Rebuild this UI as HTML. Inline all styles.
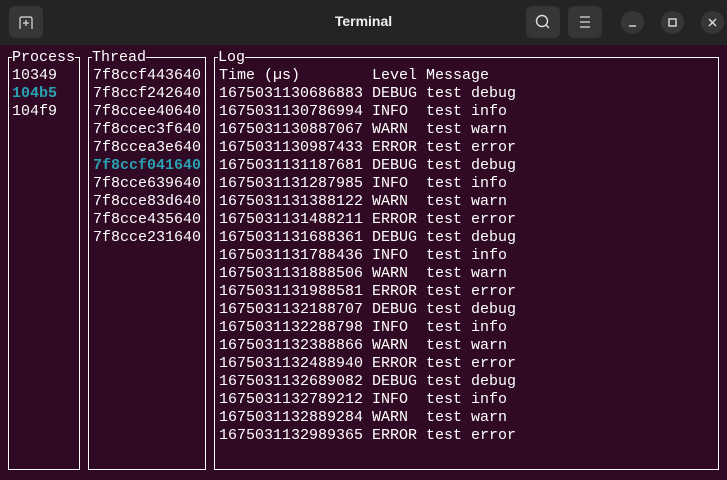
<!DOCTYPE html><html><head><style>
body{margin:0;width:727px;height:480px;background:#300a24;overflow:hidden;position:relative;font-family:"Liberation Mono",monospace;font-size:15px;color:#fff}
.hd{position:absolute;left:0;top:0;width:727px;height:45px;background:#242424}
.btn{position:absolute;top:6px;width:34px;height:32px;background:#363636;border-radius:6px}
.cb{position:absolute;top:11px;width:23px;height:23px;border-radius:50%;background:#363636}
.t{position:absolute;left:0;width:727px;top:13px;text-align:center;font-family:"Liberation Sans",sans-serif;font-weight:bold;font-size:14px;color:#eee}
.box{position:absolute;top:57px;height:413px;border:1px solid #fff;box-sizing:border-box}
.lb{position:absolute;top:-9px;left:3px;background:#300a24;line-height:18px;white-space:pre}
.c{position:absolute;top:67px;line-height:18px;white-space:pre}
.s{color:#2aa1b3;font-weight:bold}
</style></head><body>
<div class="hd">
<div class="btn" style="left:9px"><svg width="34" height="32"><path d="M11 23V13q0-2 2-2h8q2 0 2 2v10M17 14v6M14 17h6" stroke="#ddd" fill="none" stroke-width="1.2"/></svg></div>
<div class="t">Terminal</div>
<div class="btn" style="left:526px"><svg width="34" height="32"><circle cx="16" cy="15" r="5.5" stroke="#ddd" fill="none" stroke-width="1.4"/><path d="M20 19l3 3" stroke="#ddd" stroke-width="1.4"/></svg></div>
<div class="btn" style="left:568px"><svg width="34" height="32"><path d="M12 11h10M12 16h10M12 21h10" stroke="#ddd" stroke-width="1.2"/></svg></div>
<div class="cb" style="left:621px"><svg width="23" height="23"><path d="M8 15h7" stroke="#ddd" stroke-width="1.4"/></svg></div>
<div class="cb" style="left:661px"><svg width="23" height="23"><rect x="8" y="8" width="7" height="7" stroke="#ddd" fill="none" stroke-width="1.4"/></svg></div>
<div class="cb" style="left:701px"><svg width="23" height="23"><path d="M8 8l7 7M15 8l-7 7" stroke="#ddd" stroke-width="1.4"/></svg></div>
</div>
<div class="box" style="left:8px;width:72px"><span class="lb">Process</span></div>
<div class="box" style="left:88px;width:118px"><span class="lb">Thread</span></div>
<div class="box" style="left:214px;width:505px"><span class="lb">Log</span></div>
<div class="c" style="left:12px">10349
<span class="s">104b5</span>
104f9</div>
<div class="c" style="left:93px">7f8ccf443640
7f8ccf242640
7f8ccee40640
7f8ccec3f640
7f8ccea3e640
<span class="s">7f8ccf041640</span>
7f8cce639640
7f8cce83d640
7f8cce435640
7f8cce231640</div>
<div class="c" style="left:219px">Time (µs)        Level Message
1675031130686883 DEBUG test debug
1675031130786994 INFO  test info
1675031130887067 WARN  test warn
1675031130987433 ERROR test error
1675031131187681 DEBUG test debug
1675031131287985 INFO  test info
1675031131388122 WARN  test warn
1675031131488211 ERROR test error
1675031131688361 DEBUG test debug
1675031131788436 INFO  test info
1675031131888506 WARN  test warn
1675031131988581 ERROR test error
1675031132188707 DEBUG test debug
1675031132288798 INFO  test info
1675031132388866 WARN  test warn
1675031132488940 ERROR test error
1675031132689082 DEBUG test debug
1675031132789212 INFO  test info
1675031132889284 WARN  test warn
1675031132989365 ERROR test error</div>
</body></html>
